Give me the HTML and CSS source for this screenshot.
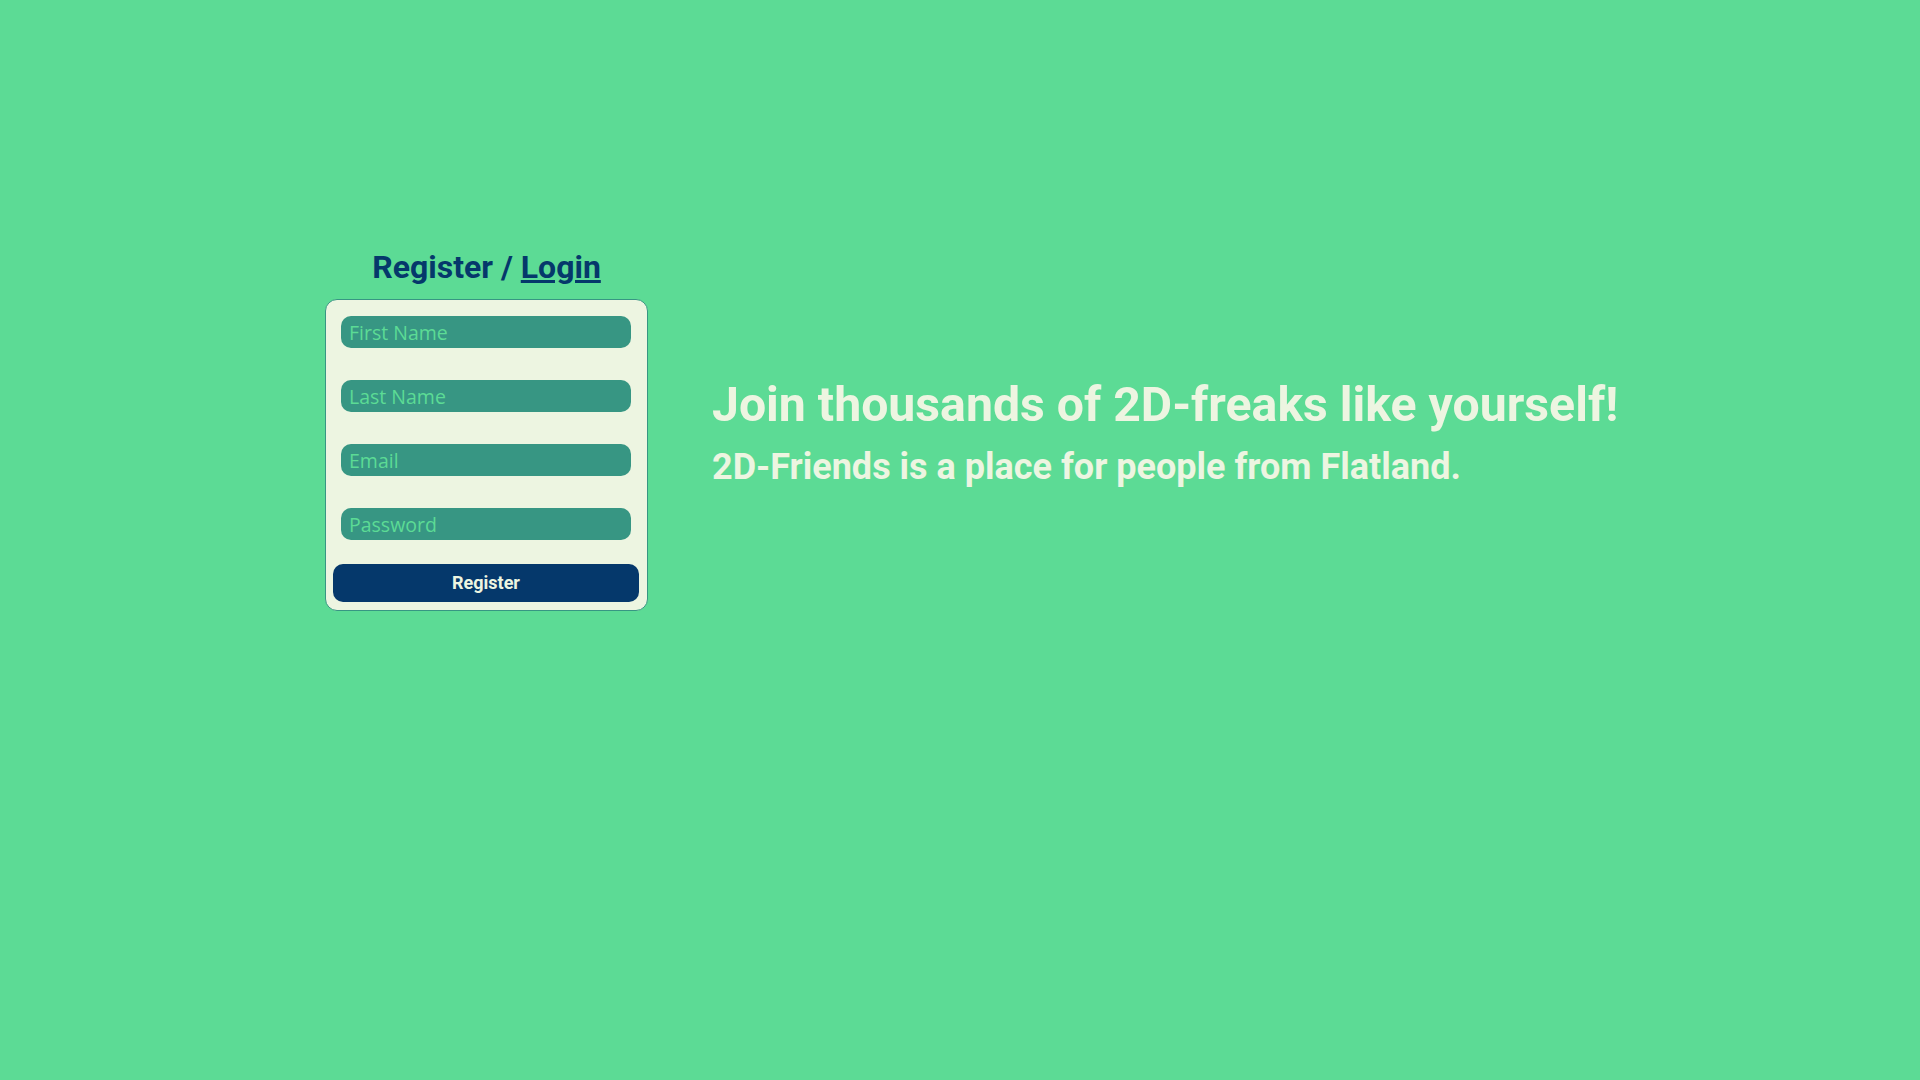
FILE: index.html
```html
<!DOCTYPE html>
<html lang="en">
<head>
<meta charset="utf-8">
<title>2D-Friends</title>
<link rel="stylesheet" href="styles.css">
</head>
<body>
<main class="page">
  <section class="auth">
    <h2 class="auth-title">Register / <a href="#" class="auth-link">Login</a></h2>
    <form class="card">
      <input class="field" type="text" placeholder="First Name">
      <input class="field" type="text" placeholder="Last Name">
      <input class="field" type="email" placeholder="Email">
      <input class="field" type="password" placeholder="Password">
      <button class="submit" type="button">Register</button>
    </form>
  </section>
  <section class="pitch">
    <h1 class="pitch-title">Join thousands of 2D-freaks like yourself!</h1>
    <p class="pitch-sub">2D-Friends is a place for people from Flatland.</p>
  </section>
</main>
</body>
</html>
```
FILE: styles.css
```css
html, body {
  margin: 0;
  padding: 0;
  height: 100%;
}
body {
  background: #5CDB95;
  font-family: Roboto, "Liberation Sans", sans-serif;
}
.page {
  display: flex;
  align-items: flex-start;
  gap: 64px;
  padding: 248px 0 0 325px;
}
.auth {
  width: 323px;
  display: flex;
  flex-direction: column;
}
.auth-title {
  margin: 0 0 13px;
  text-align: center;
  font-size: 32px;
  font-weight: 700;
  line-height: normal;
  color: #05386B;
}
.auth-link {
  color: #05386B;
  text-decoration: underline;
}
.card {
  box-sizing: border-box;
  width: 323px;
  background: #EDF5E1;
  border: 1px solid #379683;
  border-radius: 12px;
  padding: 16px 8px 8px 7px;
  display: flex;
  flex-direction: column;
  gap: 32px;
}
.field {
  box-sizing: border-box;
  margin: 0 8px;
  height: 32px;
  border: none;
  border-radius: 10px;
  background: #379683;
  padding: 0 8px;
  font-family: "Open Sans", "Noto Sans", sans-serif;
  font-size: 19.5px;
  color: #EDF5E1;
  outline: none;
}
.field::placeholder {
  color: #5CDB95;
  opacity: 1;
}
.submit {
  margin-top: -8px;
  height: 38px;
  padding: 0 0 2px;
  border: none;
  border-radius: 10px;
  background: #05386B;
  color: #EDF5E1;
  font-family: Roboto, "Liberation Sans", sans-serif;
  font-weight: 700;
  font-size: 18px;
  cursor: pointer;
}
.pitch {
  padding-top: 128px;
  color: #EDF5E1;
}
.pitch-title {
  margin: 0 0 13px;
  font-size: 48.2px;
  font-weight: 700;
  line-height: normal;
}
.pitch-sub {
  margin: 0;
  font-size: 36px;
  font-weight: 700;
  line-height: normal;
}
```
